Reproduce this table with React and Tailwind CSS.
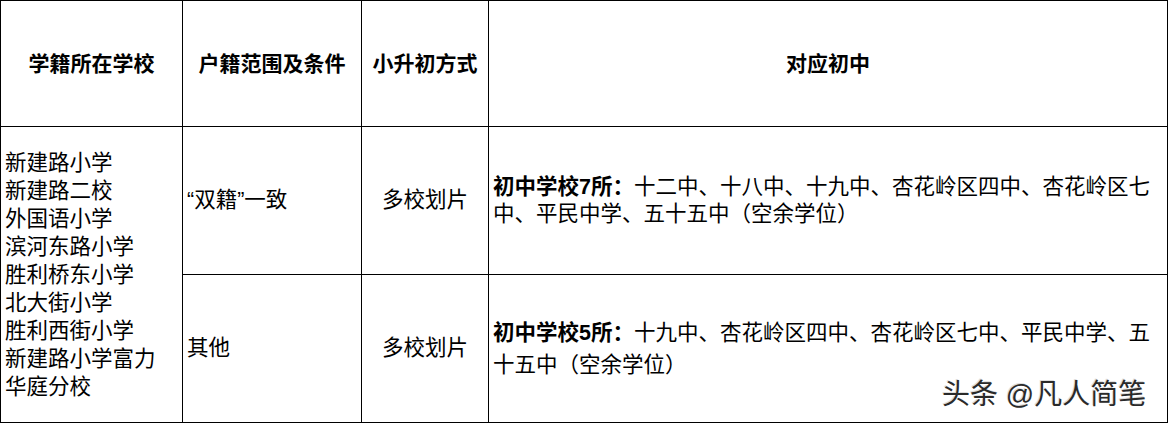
import React from "react";

const cjk = { fontFamily: '"Liberation Sans", "Noto Sans CJK SC", sans-serif' };

const schools = [
  "新建路小学",
  "新建路二校",
  "外国语小学",
  "滨河东路小学",
  "胜利桥东小学",
  "北大街小学",
  "胜利西街小学",
  "新建路小学富力",
  "华庭分校",
];

const App = () => {
  return (
    <div
      className="relative w-[1168px] h-[423px] bg-white text-black overflow-hidden"
      style={cjk}
    >
      <table className="w-[1168px] h-[423px] table-fixed border-collapse">
        <colgroup>
          <col className="w-[182px]" />
          <col className="w-[179px]" />
          <col className="w-[127px]" />
          <col />
        </colgroup>
        <thead>
          <tr className="h-[126px]">
            <th className="border-[1.5px] border-black text-[21px] font-bold text-center align-middle">
              学籍所在学校
            </th>
            <th className="border-[1.5px] border-black text-[21px] font-bold text-center align-middle">
              户籍范围及条件
            </th>
            <th className="border-[1.5px] border-black text-[21px] font-bold text-center align-middle whitespace-nowrap">
              小升初方式
            </th>
            <th className="border-[1.5px] border-black text-[21px] font-bold text-center align-middle">
              对应初中
            </th>
          </tr>
        </thead>
        <tbody>
          <tr className="h-[148px]">
            <td
              rowSpan={2}
              className="border-[1.5px] border-black align-middle pl-[4px] text-[21.5px] leading-[28px]"
            >
              {schools.map((s) => (
                <div key={s} className="whitespace-nowrap">
                  {s}
                </div>
              ))}
            </td>
            <td className="border-[1.5px] border-black align-middle pl-[4px] text-[21.5px]">
              “双籍”一致
            </td>
            <td className="border-[1.5px] border-black align-middle text-center text-[21.5px]">
              多校划片
            </td>
            <td className="border-[1.5px] border-black align-middle pl-[4px] pr-[2px] text-[21.5px] leading-[27px]">
              <span className="font-bold">初中学校7所：</span>
              十二中、十八中、十九中、杏花岭区四中、杏花岭区七中、平民中学、五十五中（空余学位）
            </td>
          </tr>
          <tr className="h-[148px]">
            <td className="border-[1.5px] border-black align-middle pl-[4px] text-[21.5px]">
              其他
            </td>
            <td className="border-[1.5px] border-black align-middle text-center text-[21.5px]">
              多校划片
            </td>
            <td className="border-[1.5px] border-black align-middle pl-[4px] pr-[2px] text-[21.5px] leading-[32px]">
              <span className="font-bold">初中学校5所：</span>
              十九中、杏花岭区四中、杏花岭区七中、平民中学、五十五中（空余学位）
            </td>
          </tr>
        </tbody>
      </table>
      <div className="absolute left-[942px] top-[378px] text-[28px] leading-[34px] text-[#2a2a2a] whitespace-nowrap [text-shadow:1px_1px_0_#fff,-1px_-1px_0_#ddd]">
        头条 @凡人简笔
      </div>
    </div>
  );
};

export default App;
